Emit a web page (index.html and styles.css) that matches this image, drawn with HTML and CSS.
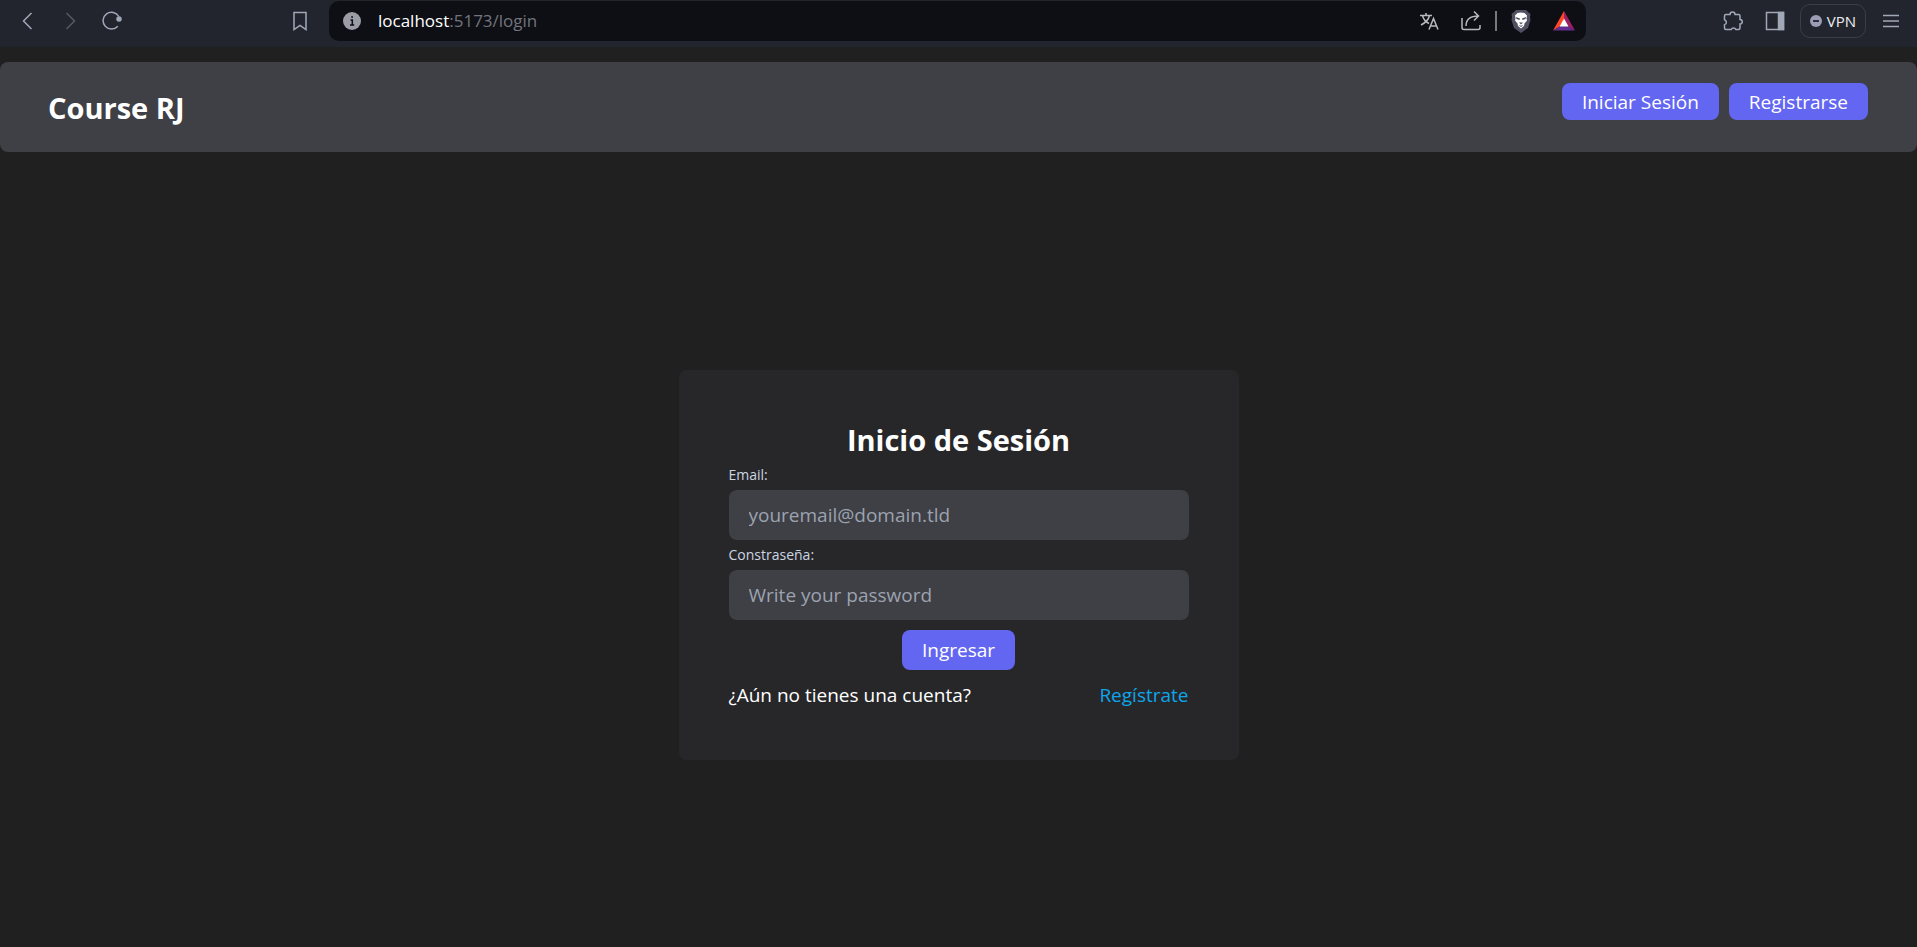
FILE: index.html
```html
<!DOCTYPE html>
<html lang="es">
<head>
<meta charset="utf-8">
<meta name="viewport" content="width=device-width, initial-scale=1">
<title>Course RJ</title>
<link rel="stylesheet" href="styles.css">
</head>
<body>
<div class="toolbar">
  <div class="nav-tools">
    <button class="icon-btn" aria-label="Back"><svg width="20" height="20" viewBox="0 0 20 20"><path d="M13.500 2 5.500 10l8 8"/></svg></button>
    <button class="icon-btn dim" aria-label="Forward" disabled><svg width="20" height="20" viewBox="0 0 20 20"><path d="M6.500 2l8 8-8 8"/></svg></button>
    <button class="icon-btn" aria-label="Reload"><svg width="20" height="20" viewBox="0 0 20 20"><path d="M15.800 15.200A8.400 8.400 0 1 1 16.800 5.500"/><circle cx="17" cy="8" r="2" class="solid"/></svg></button>
    <button class="icon-btn bookmark" aria-label="Bookmark"><svg width="20" height="20" viewBox="0 0 20 20"><path d="M4 1.500h12v17l-6-4-6 4z"/></svg></button>
  </div>
  <div class="address">
    <svg class="info" width="18" height="18" viewBox="0 0 18 18"><circle cx="9" cy="9" r="9"/><path d="M7.500 8h1.800v5M7 13h4.200M8.200 5h1.800"/></svg>
    <span class="url"><span class="host">localhost</span>:5173/login</span>
    <div class="address-tools">
      <button class="icon-btn" aria-label="Translate"><svg width="20" height="20" viewBox="0 0 20 20"><path d="M1 4.500h12M7 2v2.500M3.500 4.500C4.500 9 8 11.500 10 12.500M10.500 4.500C9.500 9 6 12 2 14M10 18.500l4.500-11 4.500 11M11.500 15h6"/></svg></button>
      <button class="icon-btn" aria-label="Share"><svg width="20" height="20" viewBox="0 0 20 20"><path d="M1 7v9.500a2 2 0 0 0 2 2h14a2 2 0 0 0 2-2V14M5 15C5 8 9 5 17.500 5M13 .500 17.500 5 13 9.500"/></svg></button>
      <span class="divider"></span>
      <button class="icon-btn" aria-label="Shields"><svg width="20" height="24" viewBox="0 0 20 24"><path class="shield" d="M5 1h10l2 2 2.500 2-.500 3 .5 3-2.500 8-7 5-7-5L.500 11 1 8 .500 5 3 3z"/><path class="lion" d="M6.500 4 10 3.500 13.500 4l2.500 2.500-.500 3 .5 2-2.500 3-.500 2.500-3 2.500-3-2.500-.500-2.500-2.500-3 .5-2-.500-3z"/><path class="face" d="M5 8l4 1.500-.500 1.500L5.500 10zM15 8l-4 1.500.500 1.500 3-1zM8 13.500h4l-2 2zM7.500 16l2.500.800 2.500-.800-2.500 2z"/></svg></button>
      <button class="icon-btn" aria-label="Rewards"><svg width="22" height="20" viewBox="0 0 22 20"><path fill="#ff4724" d="M11 0v8L7.500 15 0 19.500z"/><path fill="#9e1f63" d="M11 0l11 19.500-7.500-4.500L11 8z"/><path fill="#662d91" d="M0 19.500 7.500 15h7l7.500 4.500z"/><path fill="#fff" d="M11 7.500l4.500 8h-9z"/></svg></button>
    </div>
  </div>
  <div class="side-tools">
    <button class="icon-btn" aria-label="Extensions"><svg width="20" height="20" viewBox="0 0 20 20"><path d="M3.500 3.500H7a2.500 2.500 0 0 1 5 0h3.500a1.500 1.500 0 0 1 1.500 1.500v3.500a2.300 2.300 0 0 1 0 4.600V17a1.500 1.500 0 0 1-1.500 1.500h-2.700a2.500 2.500 0 0 0-4.600 0H3A1.500 1.500 0 0 1 1.500 17v-3.200a2.600 2.600 0 0 0 0-5V5A1.500 1.500 0 0 1 3 3.500z"/></svg></button>
    <button class="icon-btn" aria-label="Sidebar"><svg width="20" height="20" viewBox="0 0 20 20"><path d="M1.500 1.500h17v17h-17z"/><path class="solid" d="M13.500 1.500h5v17h-5z"/></svg></button>
    <button class="vpn"><svg width="12" height="12" viewBox="0 0 12 12"><circle cx="6" cy="6" r="6" fill="#9c9cb4"/><path d="M3 6h6" stroke="#22252e" stroke-width="1.800"/></svg>VPN</button>
    <button class="icon-btn" aria-label="Menu"><svg width="20" height="20" viewBox="0 0 20 20"><path d="M2 4.500h16M2 10h16M2 15.500h16"/></svg></button>
  </div>
</div>
<header class="site-header">
  <h1 class="heading">Course RJ</h1>
  <nav class="links">
    <a class="button compact" href="#login">Iniciar Sesión</a>
    <a class="button compact" href="#register">Registrarse</a>
  </nav>
</header>
<main class="content">
  <form class="card" id="login">
    <h2 class="heading">Inicio de Sesión</h2>
    <label class="label" for="email">Email:</label>
    <input class="field" id="email" type="email" placeholder="youremail@domain.tld">
    <label class="label" for="password">Constraseña:</label>
    <input class="field" id="password" type="password" placeholder="Write your password">
    <button class="button submit" type="submit">Ingresar</button>
    <p class="prompt">¿Aún no tienes una cuenta? <a class="signup" href="#register">Regístrate</a></p>
  </form>
</main>
</body>
</html>
```
FILE: styles.css
```css
* {
  box-sizing: border-box;
}

body {
  margin: 0;
  min-height: 100vh;
  display: flex;
  flex-direction: column;
  background: #202020;
  color: #fff;
  font: 19px/30px "Segoe UI", "Open Sans", sans-serif;
}

button,
input {
  font: inherit;
  color: inherit;
  border: 0;
  margin: 0;
}

/* Browser toolbar */
.toolbar {
  display: grid;
  grid-template-columns: 329px 1fr 331px;
  align-items: start;
  height: 47px;
  padding-top: 1px;
  background: #22252e;
  color: #a0a8b8;
}

.nav-tools,
.side-tools,
.address,
.address-tools {
  display: flex;
  align-items: center;
  height: 40px;
}

.nav-tools {
  gap: 22px;
  padding: 0 19px 0 18px;
}

.bookmark {
  margin-left: auto;
}

.icon-btn {
  display: flex;
  padding: 0;
  background: none;
  fill: none;
  stroke: currentColor;
  stroke-width: 1.5;
}

.icon-btn .solid {
  fill: currentColor;
}

.dim {
  color: #555a64;
}

.address {
  padding: 0 11px 0 14px;
  border-radius: 10px;
  background: #0e0f14;
}

.info {
  fill: #9a9da5;
}

.info path {
  fill: none;
  stroke: #0e0f14;
  stroke-width: 1.5;
}

.url {
  margin-left: 17px;
  color: #71757e;
  font-size: 17px;
}

.host {
  color: #fff;
}

.address-tools {
  gap: 22px;
  margin-left: auto;
  color: #b8b9bd;
}

.divider {
  width: 2px;
  height: 20px;
  margin: 0 -8px;
  background: #777980;
}

.address-tools svg [class],
.address-tools svg [fill] {
  stroke: none;
}

.shield {
  fill: #505062;
}

.lion {
  fill: #fff;
}

.face {
  fill: #505062;
}

.side-tools {
  justify-content: flex-end;
  gap: 15px;
  padding-right: 16px;
}

.side-tools .icon-btn:first-child {
  margin-right: 7px;
}

.vpn {
  display: flex;
  align-items: center;
  gap: 5px;
  height: 34px;
  padding: 0 9px;
  border: 1px solid #393e49;
  border-radius: 10px;
  background: none;
  color: #eceef2;
  font-size: 15px;
}

/* Page */
.heading {
  margin: 0;
  font-size: 29px;
  line-height: 40px;
  font-weight: 700;
}

.site-header {
  display: flex;
  justify-content: space-between;
  align-items: flex-start;
  margin: 15px 0;
  padding: 21px 49px 19px 48px;
  border-radius: 8px;
  background: #3f3f46;
}

.site-header .heading {
  line-height: 50px;
}

.links {
  display: flex;
  gap: 10px;
}

.button {
  padding: 5px 20px;
  border-radius: 8px;
  background: #6366f1;
  color: #fff;
  text-decoration: none;
}

.compact {
  padding: 4px 20px 3px;
}

.content {
  flex: 1;
  display: flex;
  align-items: center;
  justify-content: center;
  padding-top: 15px;
}

.card {
  display: flex;
  flex-direction: column;
  width: 100%;
  max-width: 560px;
  padding: 50px;
  border-radius: 8px;
  background: #27272a;
}

.card .heading {
  text-align: center;
}

.label {
  color: #cbd5e1;
  font-size: 14px;
}

.field {
  width: 100%;
  height: 50px;
  padding: 10px 20px;
  border-radius: 8px;
  background: #3f3f46;
}

.field::placeholder {
  color: #9ca3af;
  opacity: 1;
}

.submit {
  align-self: center;
  margin: 10px 0;
}

.prompt {
  display: flex;
  justify-content: space-between;
  margin: 0;
}

.signup {
  color: #0ea5e9;
  text-decoration: none;
}
```
